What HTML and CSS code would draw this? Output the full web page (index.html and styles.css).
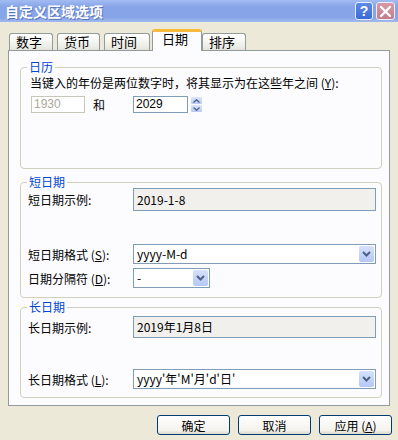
FILE: index.html
```html
<!DOCTYPE html>
<html lang="zh-CN">
<head>
  <meta charset="UTF-8">
  <title>自定义区域选项</title>
  <link rel="stylesheet" href="styles.css">
</head>
<body>
  <div class="window">
    <!-- Title bar -->
    <div class="titlebar">
      <span class="title">自定义区域选项</span>
      <div class="caption-btns">
        <span class="cap help">?</span>
        <span class="cap close">
          <svg width="13" height="13" viewBox="0 0 13 13"><path d="M2 2 L11 11 M11 2 L2 11" stroke="#fff" stroke-width="2.4" stroke-linecap="round"/></svg>
        </span>
      </div>
    </div>

    <!-- Tabs -->
    <div class="tabs">
      <span class="tab t1">数字</span>
      <span class="tab t2">货币</span>
      <span class="tab t3">时间</span>
      <span class="tab t4 active">日期</span>
      <span class="tab t5">排序</span>
    </div>

    <div class="panel">
      <!-- 日历 -->
      <div class="group g1">
        <div class="group-title">日历</div>
        <p class="hint">当键入的年份是两位数字时，将其显示为在这些年之间 (<u>Y</u>):</p>
        <div class="year-row">
          <span class="field year disabled">1930</span>
          <span class="and">和</span>
          <span class="field year">2029</span>
          <span class="spin">
            <span class="spin-btn"><svg width="7" height="4" viewBox="0 0 7 4"><path d="M0.5 3.5 L3.5 0.8 L6.5 3.5" fill="none" stroke="#4d6185" stroke-width="1.3"/></svg></span>
            <span class="spin-btn"><svg width="7" height="4" viewBox="0 0 7 4"><path d="M0.5 0.5 L3.5 3.2 L6.5 0.5" fill="none" stroke="#4d6185" stroke-width="1.3"/></svg></span>
          </span>
        </div>
      </div>

      <!-- 短日期 -->
      <div class="group g2">
        <div class="group-title">短日期</div>
        <div class="row sample-row">
          <span class="label">短日期示例:</span>
          <span class="sample">2019-1-8</span>
        </div>
        <div class="row fmt-row">
          <span class="label">短日期格式 (<u>S</u>):</span>
          <span class="combo wide">
            <span class="combo-text">yyyy-M-d</span>
            <span class="drop"><svg width="9" height="6" viewBox="0 0 9 6"><path d="M1 1 L4.5 4.5 L8 1" fill="none" stroke="#4d6185" stroke-width="2"/></svg></span>
          </span>
        </div>
        <div class="row sep-row">
          <span class="label">日期分隔符 (<u>D</u>):</span>
          <span class="combo narrow">
            <span class="combo-text">-</span>
            <span class="drop"><svg width="9" height="6" viewBox="0 0 9 6"><path d="M1 1 L4.5 4.5 L8 1" fill="none" stroke="#4d6185" stroke-width="2"/></svg></span>
          </span>
        </div>
      </div>

      <!-- 长日期 -->
      <div class="group g3">
        <div class="group-title">长日期</div>
        <div class="row sample-row">
          <span class="label">长日期示例:</span>
          <span class="sample">2019年1月8日</span>
        </div>
        <div class="row long-fmt-row">
          <span class="label">长日期格式 (<u>L</u>):</span>
          <span class="combo wide">
            <span class="combo-text">yyyy'年'M'月'd'日'</span>
            <span class="drop"><svg width="9" height="6" viewBox="0 0 9 6"><path d="M1 1 L4.5 4.5 L8 1" fill="none" stroke="#4d6185" stroke-width="2"/></svg></span>
          </span>
        </div>
      </div>
    </div>

    <!-- Buttons -->
    <div class="buttons">
      <button class="btn">确定</button>
      <button class="btn">取消</button>
      <button class="btn">应用 (<u>A</u>)</button>
    </div>
  </div>
</body>
</html>
```

FILE: styles.css
```css
* {
  margin: 0;
  padding: 0;
  box-sizing: border-box;
}

body {
  width: 398px;
  height: 440px;
  overflow: hidden;
  background-color: #ece9d8;
  font-family: "Noto Sans CJK SC", "Liberation Sans", sans-serif;
  font-size: 12px;
  color: #000;
}

.window {
  width: 398px;
  height: 440px;
}

/* Title bar */
.titlebar {
  height: 22px;
  background: linear-gradient(to bottom, #a3bcf2 0%, #86a4e8 30%, #87a5e8 80%, #a2b9ee 100%);
  display: flex;
  align-items: center;
  justify-content: space-between;
  padding: 0 3px 0 5px;
}

.title {
  color: #fff;
  font-size: 14px;
  font-weight: bold;
  line-height: 16px;
  text-shadow: 1px 1px 0 #5a76bb;
}

.caption-btns {
  display: flex;
  gap: 3px;
}

.cap {
  width: 18px;
  height: 18px;
  border: 1px solid #e8eefc;
  border-radius: 3px;
  display: flex;
  align-items: center;
  justify-content: center;
  color: #fff;
}

.help {
  background: linear-gradient(to bottom, #5f8ae6, #3a6bd6);
  font-family: "Liberation Sans", sans-serif;
  font-weight: bold;
  font-size: 14px;
}

.close {
  width: 19px;
  background: linear-gradient(to bottom, #d99aa4, #c47c88);
}

/* Tabs */
.tabs {
  height: 28px;
  display: flex;
  align-items: flex-end;
  position: relative;
  z-index: 2;
}

.tab {
  height: 17px;
  border: 1px solid #919b9c;
  border-bottom: none;
  border-radius: 3px 3px 0 0;
  background: linear-gradient(to bottom, #ffffff, #f0f0ea 70%, #e4e3dc);
  font-size: 13px;
  line-height: 16px;
  padding-left: 6px;
}

.t1 { width: 44px; margin-left: 9px; }
.t2 { width: 43px; margin-left: 4px; }
.t3 { width: 46px; margin-left: 4px; }
.t4 { width: 50px; margin-left: 2px; }
.t5 { width: 44px; }

.tab.active {
  height: 22px;
  margin-bottom: -1px;
  background: #fcfcfe;
  border-top: 3px solid #f9b93a;
  padding-left: 9px;
  line-height: 14px;
}

/* Panel */
.panel {
  margin: 0 8px;
  height: 356px;
  border: 1px solid #919b9c;
  background-color: #fcfcfe;
  padding: 0 7px 0 11px;
  position: relative;
  z-index: 1;
}

.group {
  border: 1px solid #d0d0bf;
  border-radius: 4px;
  padding: 0 5px 0 7px;
}

.g1 { margin-top: 16px; height: 102px; }
.g2 { margin-top: 13px; height: 116px; }
.g3 { margin-top: 9px; height: 91px; }

.group-title {
  width: fit-content;
  margin: -8px 0 0 -1px;
  padding: 0 2px;
  background-color: #fcfcfe;
  color: #0046d5;
  line-height: 14px;
}

.hint {
  margin: 2px 0 0 2px;
  line-height: 14px;
}

/* Year row */
.year-row {
  display: flex;
  align-items: center;
  margin-top: 6px;
  padding-left: 3px;
}

.field {
  height: 17px;
  border: 1px solid #7f9db9;
  background: #fff;
  font-family: "Liberation Sans", sans-serif;
  font-size: 12px;
  line-height: 15px;
  padding-left: 2px;
}

.year.disabled {
  width: 54px;
  border-color: #c9c7ba;
  color: #aca899;
}

.and {
  margin: 0 27px 0 8px;
  width: 13px;
}

.year {
  width: 55px;
}

.spin {
  display: flex;
  flex-direction: column;
  gap: 1px;
  margin-left: 3px;
}

.spin-btn {
  width: 11px;
  height: 7px;
  background: linear-gradient(to bottom, #dde6fb, #b9c9f2);
  border-radius: 1px;
  display: flex;
  align-items: center;
  justify-content: center;
}

/* Rows */
.row {
  display: flex;
  align-items: center;
}

.label {
  width: 105px;
  flex-shrink: 0;
}

.sample {
  flex: 1;
  height: 23px;
  border: 1px solid #7f9db9;
  background-color: #f1f0ec;
  line-height: 21px;
  padding-left: 3px;
}

.g2 .sample-row { margin-top: -1px; }
.g3 .sample-row { margin-top: 2px; }
.g3 .sample { height: 22px; line-height: 20px; }

.fmt-row { margin-top: 33px; }
.sep-row { margin-top: 4px; }
.long-fmt-row { margin-top: 31px; }

.combo {
  height: 20px;
  border: 1px solid #7f9db9;
  background: #fff;
  display: flex;
  align-items: center;
  justify-content: space-between;
  padding: 0 1px 0 3px;
}

.combo.wide { flex: 1; }
.combo.narrow { width: 77px; }

.combo-text {
  line-height: 18px;
}

.drop {
  width: 15px;
  height: 16px;
  background: linear-gradient(to bottom, #d6e1fb, #b4c7f5);
  border-radius: 2px;
  display: flex;
  align-items: center;
  justify-content: center;
}

/* Buttons */
.buttons {
  display: flex;
  justify-content: flex-end;
  gap: 8px;
  margin-top: 9px;
  padding-right: 6px;
}

.btn {
  width: 73px;
  height: 20px;
  border: 1px solid #003c74;
  border-radius: 3px;
  background: linear-gradient(to bottom, #ffffff, #f3f2ec 80%, #dcd9cc);
  font-family: "Noto Sans CJK SC", sans-serif;
  font-size: 12px;
  color: #000;
}
```
